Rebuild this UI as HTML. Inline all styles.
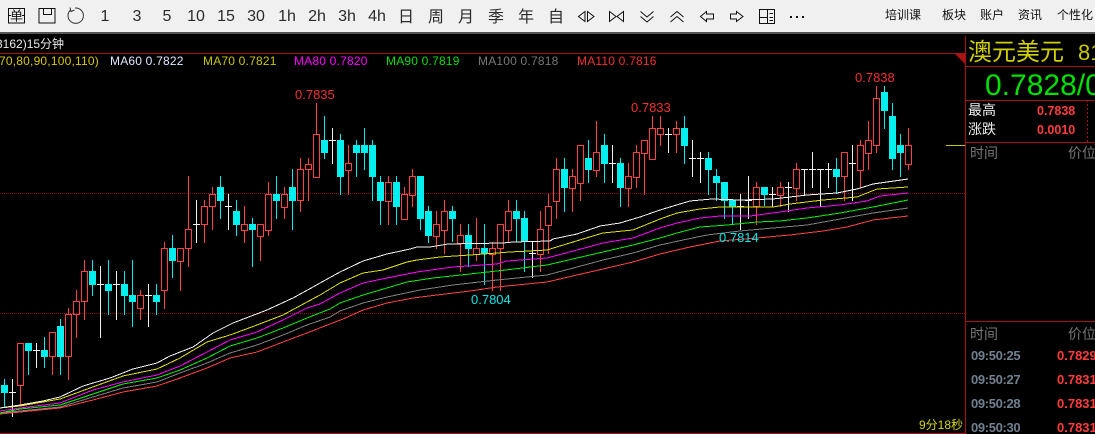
<!DOCTYPE html>
<html><head><meta charset="utf-8"><style>
html,body{margin:0;padding:0;background:#000;width:1095px;height:434px;overflow:hidden}
svg{display:block;position:absolute;left:0;top:0}
text{font-family:"Liberation Sans","WenQuanYi Zen Hei","Noto Sans CJK SC",sans-serif;font-size:12px}
.t text{font-size:16px;fill:#2a2a2a;text-anchor:middle}
.m text{font-size:12px;fill:#111;text-anchor:middle;font-family:"Liberation Sans","Noto Sans CJK SC",sans-serif}
.b{font-weight:bold}
.l text{letter-spacing:.2px}
.p text{font-size:13px}
.r text{font-size:13px;font-weight:bold}
</style></head><body>
<svg width="1095" height="434" viewBox="0 0 1095 434">
<rect width="1095" height="32" fill="#f0f0f0"/><rect y="32" width="1095" height="2" fill="#555"/>
<g fill="none" stroke="#111" stroke-width="1">
<path d="M8.500 8.500H24.500V23H8.500ZM8.500 15.500H11M22 15.500H24.500"/>
<path d="M39 8.500H55V23H39ZM43.500 8.500V14.500H51.500V8.500"/>
<path d="M70.500 10A7.700 7.700 0 1 0 75 8M70 7.500L71 11.500L74.500 10" stroke="#333"/>
<path d="M585 11.500L578.500 16.500L585 21.500ZM587.500 11.500L594 16.500L587.500 21.500Z"/>
<path d="M609.500 11.500L616 16.500L609.500 21.500ZM623.500 11.500L617 16.500L623.500 21.500Z"/>
<path d="M640.500 11.500L647 17L653.500 11.500M640.500 16.500L647 22L653.500 16.500"/>
<path d="M670.500 17L677 11.500L683.500 17M670.500 22L677 16.500L683.500 22"/>
<path d="M706.500 11.500L700.500 16.500L706.500 21.500V19H713.500V14H706.500Z"/>
<path d="M736.500 11.500L743 16.500L736.500 21.500V19H730.500V14H736.500Z"/>
<path d="M759.500 9.500H774.500V23.500H759.500ZM767.500 9.500V23.500M759.500 17.500H767.500M769.500 13.500H773M769.500 17.500H773M769.500 20.500H773"/>
</g>
<g fill="#111"><rect x="790" y="16" width="2" height="2"/><rect x="796" y="16" width="2" height="2"/><rect x="802" y="16" width="2" height="2"/></g>
<text x="16.500" y="20.500" text-anchor="middle" style="font-size:13px" fill="#111">单</text>
<g class="t">
<text x="105" y="21">1</text><text x="137" y="21">3</text><text x="167" y="21">5</text><text x="196" y="21">10</text><text x="226" y="21">15</text><text x="256" y="21">30</text><text x="287" y="21">1h</text><text x="317" y="21">2h</text><text x="347" y="21">3h</text><text x="377" y="21">4h</text>
<text x="406" y="22">日</text><text x="436" y="22">周</text><text x="466" y="22">月</text><text x="496" y="22">季</text><text x="526" y="22">年</text><text x="556" y="22">自</text>
</g>
<g class="m"><text x="903" y="19">培训课</text><text x="954" y="19">板块</text><text x="992" y="19">账户</text><text x="1030" y="19">资讯</text><text x="1075" y="19">个性化</text></g>

<g fill="none" stroke="#a81414">
<path d="M0 53.500H965M965.500 36V434M965 66.500H1095M965 100.500H1095M965 142.500H1095M965 321.500H1095M0 433.500H965"/>
<path d="M0 193.500H965M0 313.500H965" stroke="#8a1010" stroke-dasharray="1 1"/>
<path d="M1087.500 100V142" stroke-dasharray="2 2"/>
</g>
<path d="M955 54H965V64Z" fill="#a81414"/>
<path d="M946 145.500H965" stroke="#c8c800"/>

<text x="-8" y="48" fill="#e8e8e8">(3162)15分钟</text>
<g class="l">
<text x="-1" y="65" fill="#d8c800">70,80,90,100,110)</text>
<text x="110" y="65" fill="#e0e8ff">MA60 0.7822</text>
<text x="203" y="65" fill="#c8c800">MA70 0.7821</text>
<text x="294" y="65" fill="#ff00ff">MA80 0.7820</text>
<text x="386" y="65" fill="#00e000">MA90 0.7819</text>
<text x="478" y="65" fill="#777">MA100 0.7818</text>
<text x="577" y="65" fill="#f03030">MA110 0.7816</text>
</g>

<g fill="none" shape-rendering="crispEdges">
<path stroke="#ff4040" d="M20.500 385V405M17.500 343.500H23.500V385.500H17.500Z
M52.500 356V375M49.500 332.500H55.500V356.500H49.500Z
M68.500 308V314M68.500 356V380M65.500 314.500H71.500V356.500H65.500Z
M76.500 290V301M76.500 314V338M73.500 301.500H79.500V314.500H73.500Z
M84.500 260V271M84.500 301V320M81.500 271.500H87.500V301.500H81.500Z
M140.500 290V295M140.500 308V320M137.500 295.500H143.500V308.500H137.500Z
M164.500 242V248M164.500 290V309M161.500 248.500H167.500V290.500H161.500Z
M180.500 261V291M177.500 248.500H183.500V261.500H177.500Z
M188.500 176V229M188.500 248V267M185.500 229.500H191.500V248.500H185.500Z
M204.500 200V206M204.500 224V243M201.500 206.500H207.500V224.500H201.500Z
M212.500 187V194M212.500 206V230M209.500 194.500H215.500V206.500H209.500Z
M244.500 206V224M244.500 230V243M241.500 224.500H247.500V230.500H241.500Z
M260.500 236V261M257.500 224.500H263.500V236.500H257.500Z
M268.500 182V194M268.500 230V236M265.500 194.500H271.500V230.500H265.500Z
M284.500 187V194M284.500 207V219M281.500 194.500H287.500V207.500H281.500Z
M300.500 158V169M300.500 200V212M297.500 169.500H303.500V200.500H297.500Z
M308.500 158V164M308.500 169V201M305.500 164.500H311.500V169.500H305.500Z
M316.500 103V134M313.500 134.500H319.500V177.500H313.500Z
M348.500 145V163M348.500 170V195M345.500 163.500H351.500V170.500H345.500Z
M388.500 176V182M388.500 201V225M385.500 182.500H391.500V201.500H385.500Z
M404.500 187V194M401.500 194.500H407.500V219.500H401.500Z
M412.500 169V176M412.500 195V207M409.500 176.500H415.500V195.500H409.500Z
M436.500 211V224M436.500 236V249M433.500 224.500H439.500V236.500H433.500Z
M444.500 200V211M444.500 230V254M441.500 211.500H447.500V230.500H441.500Z
M460.500 224V235M460.500 243V272M457.500 235.500H463.500V243.500H457.500Z
M476.500 218V248M476.500 254V261M473.500 248.500H479.500V254.500H473.500Z
M492.500 242V248M492.500 254V291M489.500 248.500H495.500V254.500H489.500Z
M500.500 248V291M497.500 224.500H503.500V248.500H497.500Z
M508.500 200V211M508.500 230V242M505.500 211.500H511.500V230.500H505.500Z
M540.500 211V229M540.500 254V272M537.500 229.500H543.500V254.500H537.500Z
M548.500 194V206M548.500 225V254M545.500 206.500H551.500V225.500H545.500Z
M556.500 158V169M556.500 201V219M553.500 169.500H559.500V201.500H553.500Z
M572.500 169V176M572.500 188V212M569.500 176.500H575.500V188.500H569.500Z
M580.500 183V201M577.500 145.500H583.500V183.500H577.500Z
M596.500 121V152M596.500 170V177M593.500 152.500H599.500V170.500H593.500Z
M628.500 163V176M628.500 188V207M625.500 176.500H631.500V188.500H625.500Z
M636.500 145V152M636.500 177V188M633.500 152.500H639.500V177.500H633.500Z
M644.500 153V195M641.500 140.500H647.500V153.500H641.500Z
M652.500 116V128M649.500 128.500H655.500V159.500H649.500Z
M660.500 116V128M660.500 134V146M657.500 128.500H663.500V134.500H657.500Z
M676.500 121V128M676.500 134V153M673.500 128.500H679.500V134.500H673.500Z
M756.500 182V187M756.500 206V225M753.500 187.500H759.500V206.500H753.500Z
M780.500 182V187M780.500 195V207M777.500 187.500H783.500V195.500H777.500Z
M796.500 163V169M796.500 188V201M793.500 169.500H799.500V188.500H793.500Z
M844.500 176V201M841.500 152.500H847.500V176.500H841.500Z
M860.500 140V145M860.500 170V188M857.500 145.500H863.500V170.500H857.500Z
M868.500 121V140M868.500 153V170M865.500 140.500H871.500V153.500H865.500Z
M876.500 86V98M876.500 145V153M873.500 98.500H879.500V145.500H873.500Z
M908.500 128V145M908.500 164V170M905.500 145.500H911.500V164.500H905.500Z"/>
<path stroke="#00f0f0" d="M4.500 379V408M28.500 343V375M44.500 337V368M60.500 319V375M92.500 260V296M108.500 260V315M124.500 271V315M132.500 260V327M156.500 284V315M172.500 235V278M220.500 176V219M236.500 200V236M252.500 218V267M276.500 176V219M292.500 169V230M324.500 116V159M340.500 134V195M356.500 140V177M364.500 128V170M372.500 140V201M380.500 176V225M396.500 176V225M420.500 176V230M428.500 206V243M452.500 206V242M468.500 224V267M484.500 224V285M516.500 200V242M524.500 211V272M564.500 158V212M588.500 140V183M604.500 134V183M620.500 158V207M684.500 116V164M708.500 152V195M716.500 169V201M724.500 182V219M732.500 200V224M764.500 187V206M836.500 158V194M884.500 86V129M892.500 103V170M900.500 134V177"/>
<path fill="#00f0f0" d="M1 385h7v8h-7zM25 343h7v8h-7zM41 350h7v7h-7zM57 326h7v31h-7zM89 271h7v14h-7zM105 284h7v7h-7zM121 284h7v12h-7zM129 295h7v7h-7zM153 295h7v7h-7zM169 248h7v13h-7zM217 187h7v14h-7zM233 211h7v14h-7zM249 224h7v6h-7zM273 194h7v7h-7zM289 187h7v14h-7zM321 140h7v13h-7zM337 140h7v37h-7zM353 145h7v8h-7zM361 145h7v8h-7zM369 145h7v32h-7zM377 182h7v19h-7zM393 182h7v25h-7zM417 176h7v43h-7zM425 211h7v25h-7zM449 211h7v8h-7zM465 235h7v14h-7zM481 248h7v6h-7zM513 211h7v8h-7zM521 218h7v24h-7zM561 169h7v19h-7zM585 158h7v12h-7zM601 145h7v19h-7zM617 163h7v25h-7zM681 128h7v18h-7zM705 158h7v12h-7zM713 176h7v7h-7zM721 182h7v19h-7zM729 200h7v7h-7zM761 187h7v8h-7zM833 169h7v8h-7zM881 92h7v19h-7zM889 116h7v43h-7zM897 145h7v8h-7z"/>
<path stroke="#f0f0f0" d="M12.500 379V417M9 392.500h7M36.500 343V368M33 350.500h7M100.500 266V338M97 284.500h7M116.500 271V320M113 284.500h7M148.500 284V327M145 295.500h7M196.500 200V243M193 224.500h7M228.500 194V230M225 206.500h7M332.500 128V164M329 140.500h7M532.500 242V278M529 253.500h7M612.500 145V183M609 163.500h7M668.500 128V153M665 134.500h7M692.500 140V177M689 158.500h7M700.500 152V183M697 158.500h7M740.500 194V230M737 206.500h7M748.500 176V219M745 200.500h7M772.500 187V207M769 194.500h7M788.500 182V212M785 187.500h7M804.500 169V195M801 169.500h7M812.500 152V188M809 169.500h7M820.500 169V207M817 169.500h7M828.500 163V188M825 169.500h7M852.500 145V201M849 163.500h7"/>
</g>

<g fill="none" stroke-width="1" shape-rendering="crispEdges">
<polyline stroke="#ff4040" points="0,414 60,408 93,400 123,392 157,386 180,378 207,368 230,358 257,352 283,342 307,333 330,324 343,319 363,310 387,303 413,298 437,295 470,291 497,287 547,282 577,275 603,269 633,262 660,254 690,247 720,241 757,238 790,235 823,231 847,227 873,220 908,216"/>
<polyline stroke="#808080" points="0,413 60,407 93,397 123,388 157,382 180,373 207,363 230,353 257,345 283,335 307,325 330,317 340,311 363,303 387,297 420,290 453,285 497,280 547,275 577,267 603,260 633,253 660,245 683,240 707,235 740,231 773,228 807,225 840,219 873,213 908,208"/>
<polyline stroke="#00f000" points="0,413 20,409 60,405 93,394 123,384 157,378 180,370 207,358 230,346 257,338 283,328 307,318 330,309 340,303 363,295 387,288 407,282 433,278 470,274 497,271 547,265 577,258 603,252 633,245 660,238 677,233 700,227 727,225 757,222 780,221 807,218 840,213 873,207 908,200"/>
<polyline stroke="#ff00ff" points="0,411 20,408 60,403 93,390 123,382 157,375 180,366 207,352 230,340 257,332 283,320 307,308 320,304 340,293 363,283 387,278 417,272 453,267 497,264 507,261 547,258 577,250 603,243 633,238 660,228 677,223 700,218 720,216 750,216 773,213 807,208 840,205 867,201 880,196 908,193"/>
<polyline stroke="#e0e000" points="0,408 20,406 60,399 90,388 123,376 157,369 180,358 207,342 230,335 257,325 283,315 307,302 320,295 340,283 363,273 383,270 407,262 417,260 440,257 470,255 497,253 510,252 547,250 573,242 603,233 633,230 660,219 677,213 700,209 720,207 773,207 790,204 823,200 857,197 877,189 908,187"/>
<polyline stroke="#f4f4f4" points="0,408 20,405 43,401 60,397 83,386 110,378 133,369 157,363 170,356 193,347 213,333 233,323 267,310 293,298 313,287 320,283 340,272 363,261 387,254 410,249 417,247 430,247 448,244 503,243 513,242 550,241 553,239 577,234 600,226 620,223 640,217 660,210 690,201 712,199 740,200 773,199 807,195 837,193 857,189 873,184 887,182 908,179"/>
</g>

<g class="p">
<text x="295" y="99" fill="#f03030">0.7835</text>
<text x="631" y="112" fill="#f03030">0.7833</text>
<text x="855" y="82" fill="#f03030">0.7838</text>
<text x="471" y="304" fill="#00e8e8">0.7804</text>
<text x="719" y="242" fill="#00e8e8">0.7814</text>
</g>
<text x="919" y="429" fill="#d8d800">9分18秒</text>

<text x="968" y="60" fill="#d0d000" style="font-size:24px;font-family:'Noto Sans CJK SC',sans-serif">澳元美元</text>
<text x="1078" y="60" fill="#c8c800" style="font-size:22px">81</text>
<text x="985" y="95" fill="#00e000" style="font-size:30px">0.7828/0</text>
<text x="968" y="115" fill="#eee" style="font-size:14px">最高</text>
<text x="968" y="134" fill="#eee" style="font-size:14px">涨跌</text>
<text x="1037" y="115" fill="#ff3c3c" class="b" style="font-size:12.500px">0.7838</text>
<text x="1037" y="134" fill="#ff3c3c" class="b" style="font-size:12.500px">0.0010</text>
<text x="970" y="158" fill="#777" style="font-size:14px">时间</text>
<text x="1068" y="158" fill="#777" style="font-size:14px">价位</text>
<text x="970" y="339" fill="#777" style="font-size:14px">时间</text>
<text x="1068" y="339" fill="#777" style="font-size:14px">价位</text>
<g class="r" fill="#70808f" letter-spacing="-.35">
<text x="971" y="360">09:50:25</text><text x="971" y="384">09:50:27</text><text x="971" y="408">09:50:28</text><text x="971" y="432">09:50:30</text></g>
<g class="r" fill="#ff3c3c">
<text x="1057" y="360">0.7829</text><text x="1057" y="384">0.7831</text><text x="1057" y="408">0.7831</text><text x="1057" y="432">0.7831</text></g>
</svg>
</body></html>
